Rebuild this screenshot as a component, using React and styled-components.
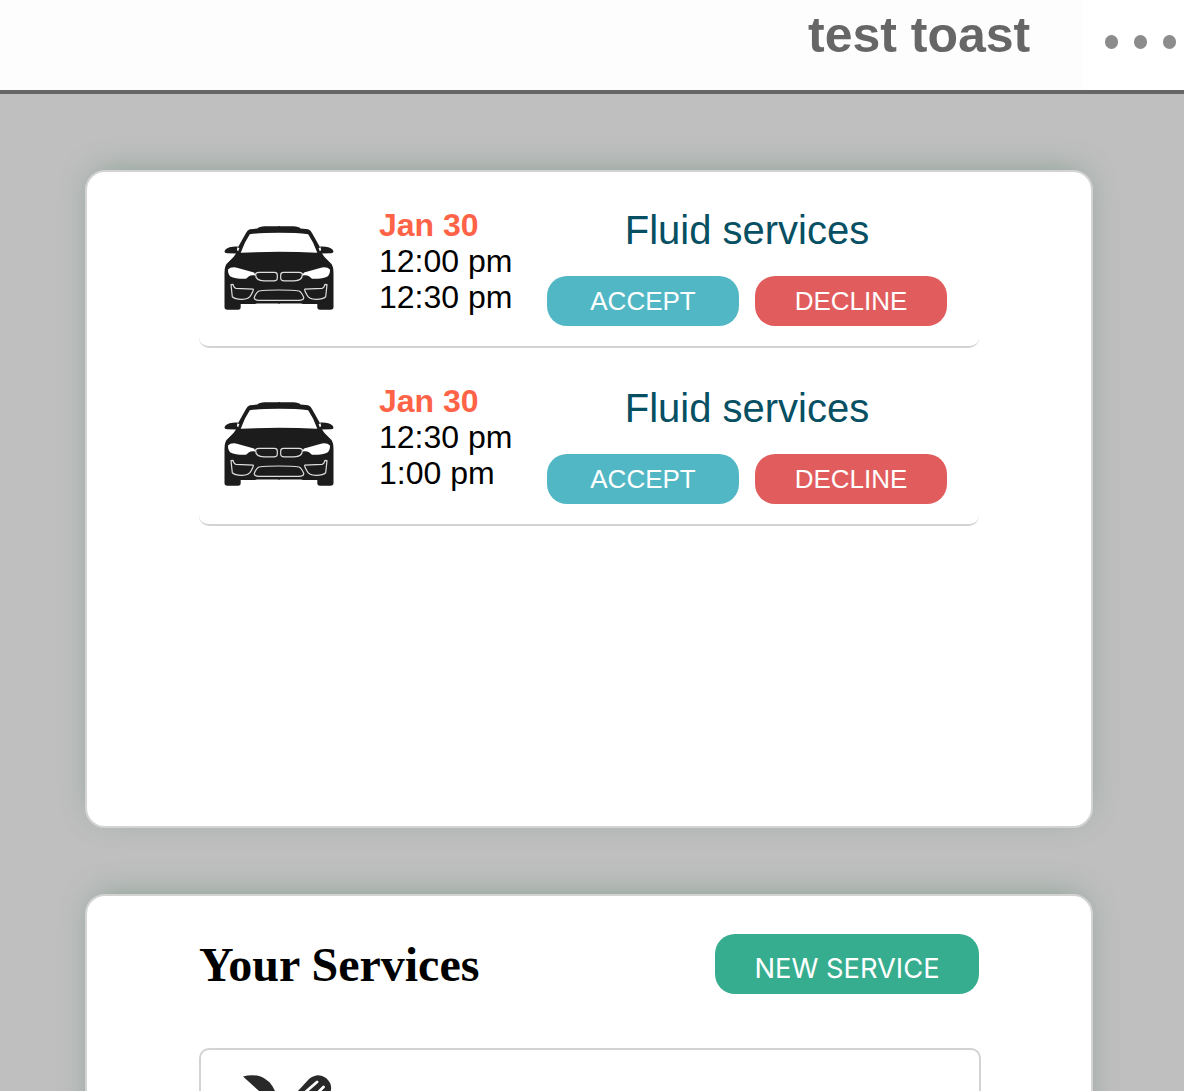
import React from "react";
import styled, { createGlobalStyle } from "styled-components";

const GlobalStyle = createGlobalStyle`
  * { box-sizing: border-box; }
  html, body { margin: 0; padding: 0; }
  body {
    background: #bfbfbf;
    font-family: "Liberation Sans", Arial, sans-serif;
    overflow: hidden;
  }
`;

const Page = styled.div`
  height: 1091px;
  overflow: hidden;
  background: #bfbfbf;
`;

const Header = styled.header`
  display: flex;
  justify-content: flex-end;
  height: 94px;
  background: #fdfdfd;
  border-bottom: 4px solid #666;
`;

const Title = styled.h1`
  margin: 0;
  padding-top: 6px;
  width: 275px;
  font-size: 50px;
  font-weight: 700;
  line-height: 58px;
  color: #666;
  white-space: nowrap;
`;

const MenuButton = styled.div`
  display: flex;
  gap: 15.6px;
  width: 101px;
  padding: 35.4px 0 0 21.7px;
  background: #fff;
`;

const Dot = styled.span`
  flex: none;
  width: 13.4px;
  height: 13.4px;
  border-radius: 50%;
  background: #8c8c8c;
`;

const Main = styled.main`
  display: flex;
  flex-direction: column;
  gap: 66px;
  padding: 76px 91px 0 85px;
`;

const Card = styled.section`
  flex: none;
  height: 658px;
  padding: ${(p) => p.$pad} 111px 0 112px;
  background: #fff;
  border: 2px solid #d3d3d3;
  border-radius: 20px;
  box-shadow: 0 -6px 34px -10px rgba(40, 104, 72, 0.42);
`;

const Request = styled.article`
  display: flex;
  width: 780px;
  height: ${(p) => p.$height};
  padding-top: 35px;
  border-bottom: 2px solid #d3d3d3;
  border-radius: 10px;
`;

const CarBox = styled.div`
  width: 180px;
  padding: 18px 0 0 24px;
`;

const Times = styled.div`
  width: 168px;
  font-size: 32px;
  line-height: 36px;
  color: #000;
  white-space: nowrap;
`;

const DateText = styled.div`
  font-weight: 700;
  color: #ff6347;
`;

const Actions = styled.div`
  width: 400px;
  padding-top: ${(p) => p.$top};
`;

const ServiceName = styled.div`
  height: 69px;
  font-size: 40px;
  line-height: 46px;
  text-align: center;
  color: #074f62;
`;

const Buttons = styled.div`
  display: flex;
  gap: 16px;
`;

const Button = styled.button`
  width: 192px;
  height: 50px;
  padding: 0;
  border: 0;
  border-radius: 20px;
  background: ${(p) => p.$color};
  color: #fff;
  font: 26px/50px "Liberation Sans", Arial, sans-serif;
`;

const NewButton = styled(Button)`
  width: 264px;
  height: 60px;
  padding-top: 8px;
  font: 27.3px/54px Inter, sans-serif;
`;

const ServicesHead = styled.div`
  display: flex;
  justify-content: space-between;
  width: 780px;
  height: 114px;
`;

const Heading = styled.h2`
  margin: 0;
  padding-top: 3px;
  font: 700 48px/55px "Liberation Serif", "Times New Roman", serif;
  color: #000;
`;

const ServiceItem = styled.div`
  width: 782px;
  height: 200px;
  padding: 24px 0 0 40px;
  border: 2px solid #d3d3d3;
  border-radius: 10px;
`;

const Icon = styled.svg`
  display: block;
`;

function Mirrored({ children }) {
  return (
    <>
      {children}
      <g transform="translate(112 0) scale(-1 1)">{children}</g>
    </>
  );
}

function Car() {
  return (
    <Icon width="112" height="86" viewBox="0 0 112 86">
      <Mirrored>
        <path
          d="M57 1.200H42Q36 1.400 34.500 3.500L27 4.300Q24.500 5 23 8L14 24 15 21.500Q6 21 2.500 24.500 0 28 4 28.300L13 28.500 10.500 32 3.500 39Q1.500 42 1.500 48V82Q1.500 84.800 4.500 84.800H15Q17.700 84.800 17.700 82V79H32L34 78.500H57Z"
          fill="#1c1c1c"
        />
      </Mirrored>
      <path
        d="M56 7.800Q38 7.800 26.800 9.200L22 17.500 17.700 27.800Q36 26.800 56 26.800T94.300 27.800L90 17.500 85.200 9.200Q74 7.800 56 7.800Z"
        fill="#fff"
      />
      <path
        d="M56 65Q43 65 36 66 33.500 67 31.300 72.300 31 75.300 36 75.300H76Q81 75.300 80.700 72.300 78.500 67 76 66 69 65 56 65Z"
        fill="none"
        stroke="#dedede"
        strokeWidth="1.200"
      />
      <Mirrored>
        <path d="M14.500 22.500 16.400 23 15.200 26.200 13.800 25Z" fill="#fff" />
        <path
          d="M5 44.500Q7.500 41.800 13 42.500L31 47.400 33 50.500Q28 49.800 26 51.200L23 53.800Q12 54 7.500 51.500 4.800 49 5 44.500Z"
          fill="#fff"
        />
        <g fill="none" stroke="#dedede" strokeWidth="1.200" strokeLinejoin="round">
          <path d="M36 47.300H51.500Q54.300 47.300 54.300 50V53Q54.300 55.800 51 55.800H41Q32.700 55.800 32.600 49.500 32.600 47.300 36 47.300Z" />
          <path d="M8 59.600 10 59.300Q11 63 13 63.300L30.300 64.200Q30.800 65 28 70Q26 74.500 18.500 74.300 12 74.300 9.300 71.800Z" />
        </g>
      </Mirrored>
    </Icon>
  );
}

function Tools() {
  return (
    <Icon width="92" height="80" viewBox="0 0 92 80">
      <path
        d="M2 2.600Q10 0 19 2.200 29 5.500 34 17L36 24 50 42 42 50 28 32 18 17ZM56.500 17.500 68 5Q77-2 85 4 92 10 89.500 18L84 27 48 66 34 58Z"
        fill="#292929"
      />
      <path d="M64.500 18 76 8M75.500 20 82.500 13" stroke="#fff" strokeWidth="2.800" strokeLinecap="round" />
    </Icon>
  );
}

const requests = [
  { date: "Jan 30", start: "12:00 pm", end: "12:30 pm", height: "176px", offset: "0px" },
  { date: "Jan 30", start: "12:30 pm", end: "1:00 pm", height: "178px", offset: "2px" },
];

export default function App() {
  return (
    <Page>
      <GlobalStyle />
      <Header>
        <Title>test toast</Title>
        <MenuButton>
          <Dot />
          <Dot />
          <Dot />
        </MenuButton>
      </Header>
      <Main>
        <Card $pad="0">
          {requests.map((r) => (
            <Request key={r.start} $height={r.height}>
              <CarBox>
                <Car />
              </CarBox>
              <Times>
                <DateText>{r.date}</DateText>
                <div>{r.start}</div>
                <div>{r.end}</div>
              </Times>
              <Actions $top={r.offset}>
                <ServiceName>Fluid services</ServiceName>
                <Buttons>
                  <Button $color="#52b7c4">ACCEPT</Button>
                  <Button $color="#e15d5d">DECLINE</Button>
                </Buttons>
              </Actions>
            </Request>
          ))}
        </Card>
        <Card $pad="38px">
          <ServicesHead>
            <Heading>Your Services</Heading>
            <NewButton $color="#37ad8f">NEW SERVICE</NewButton>
          </ServicesHead>
          <ServiceItem>
            <Tools />
          </ServiceItem>
        </Card>
      </Main>
    </Page>
  );
}
